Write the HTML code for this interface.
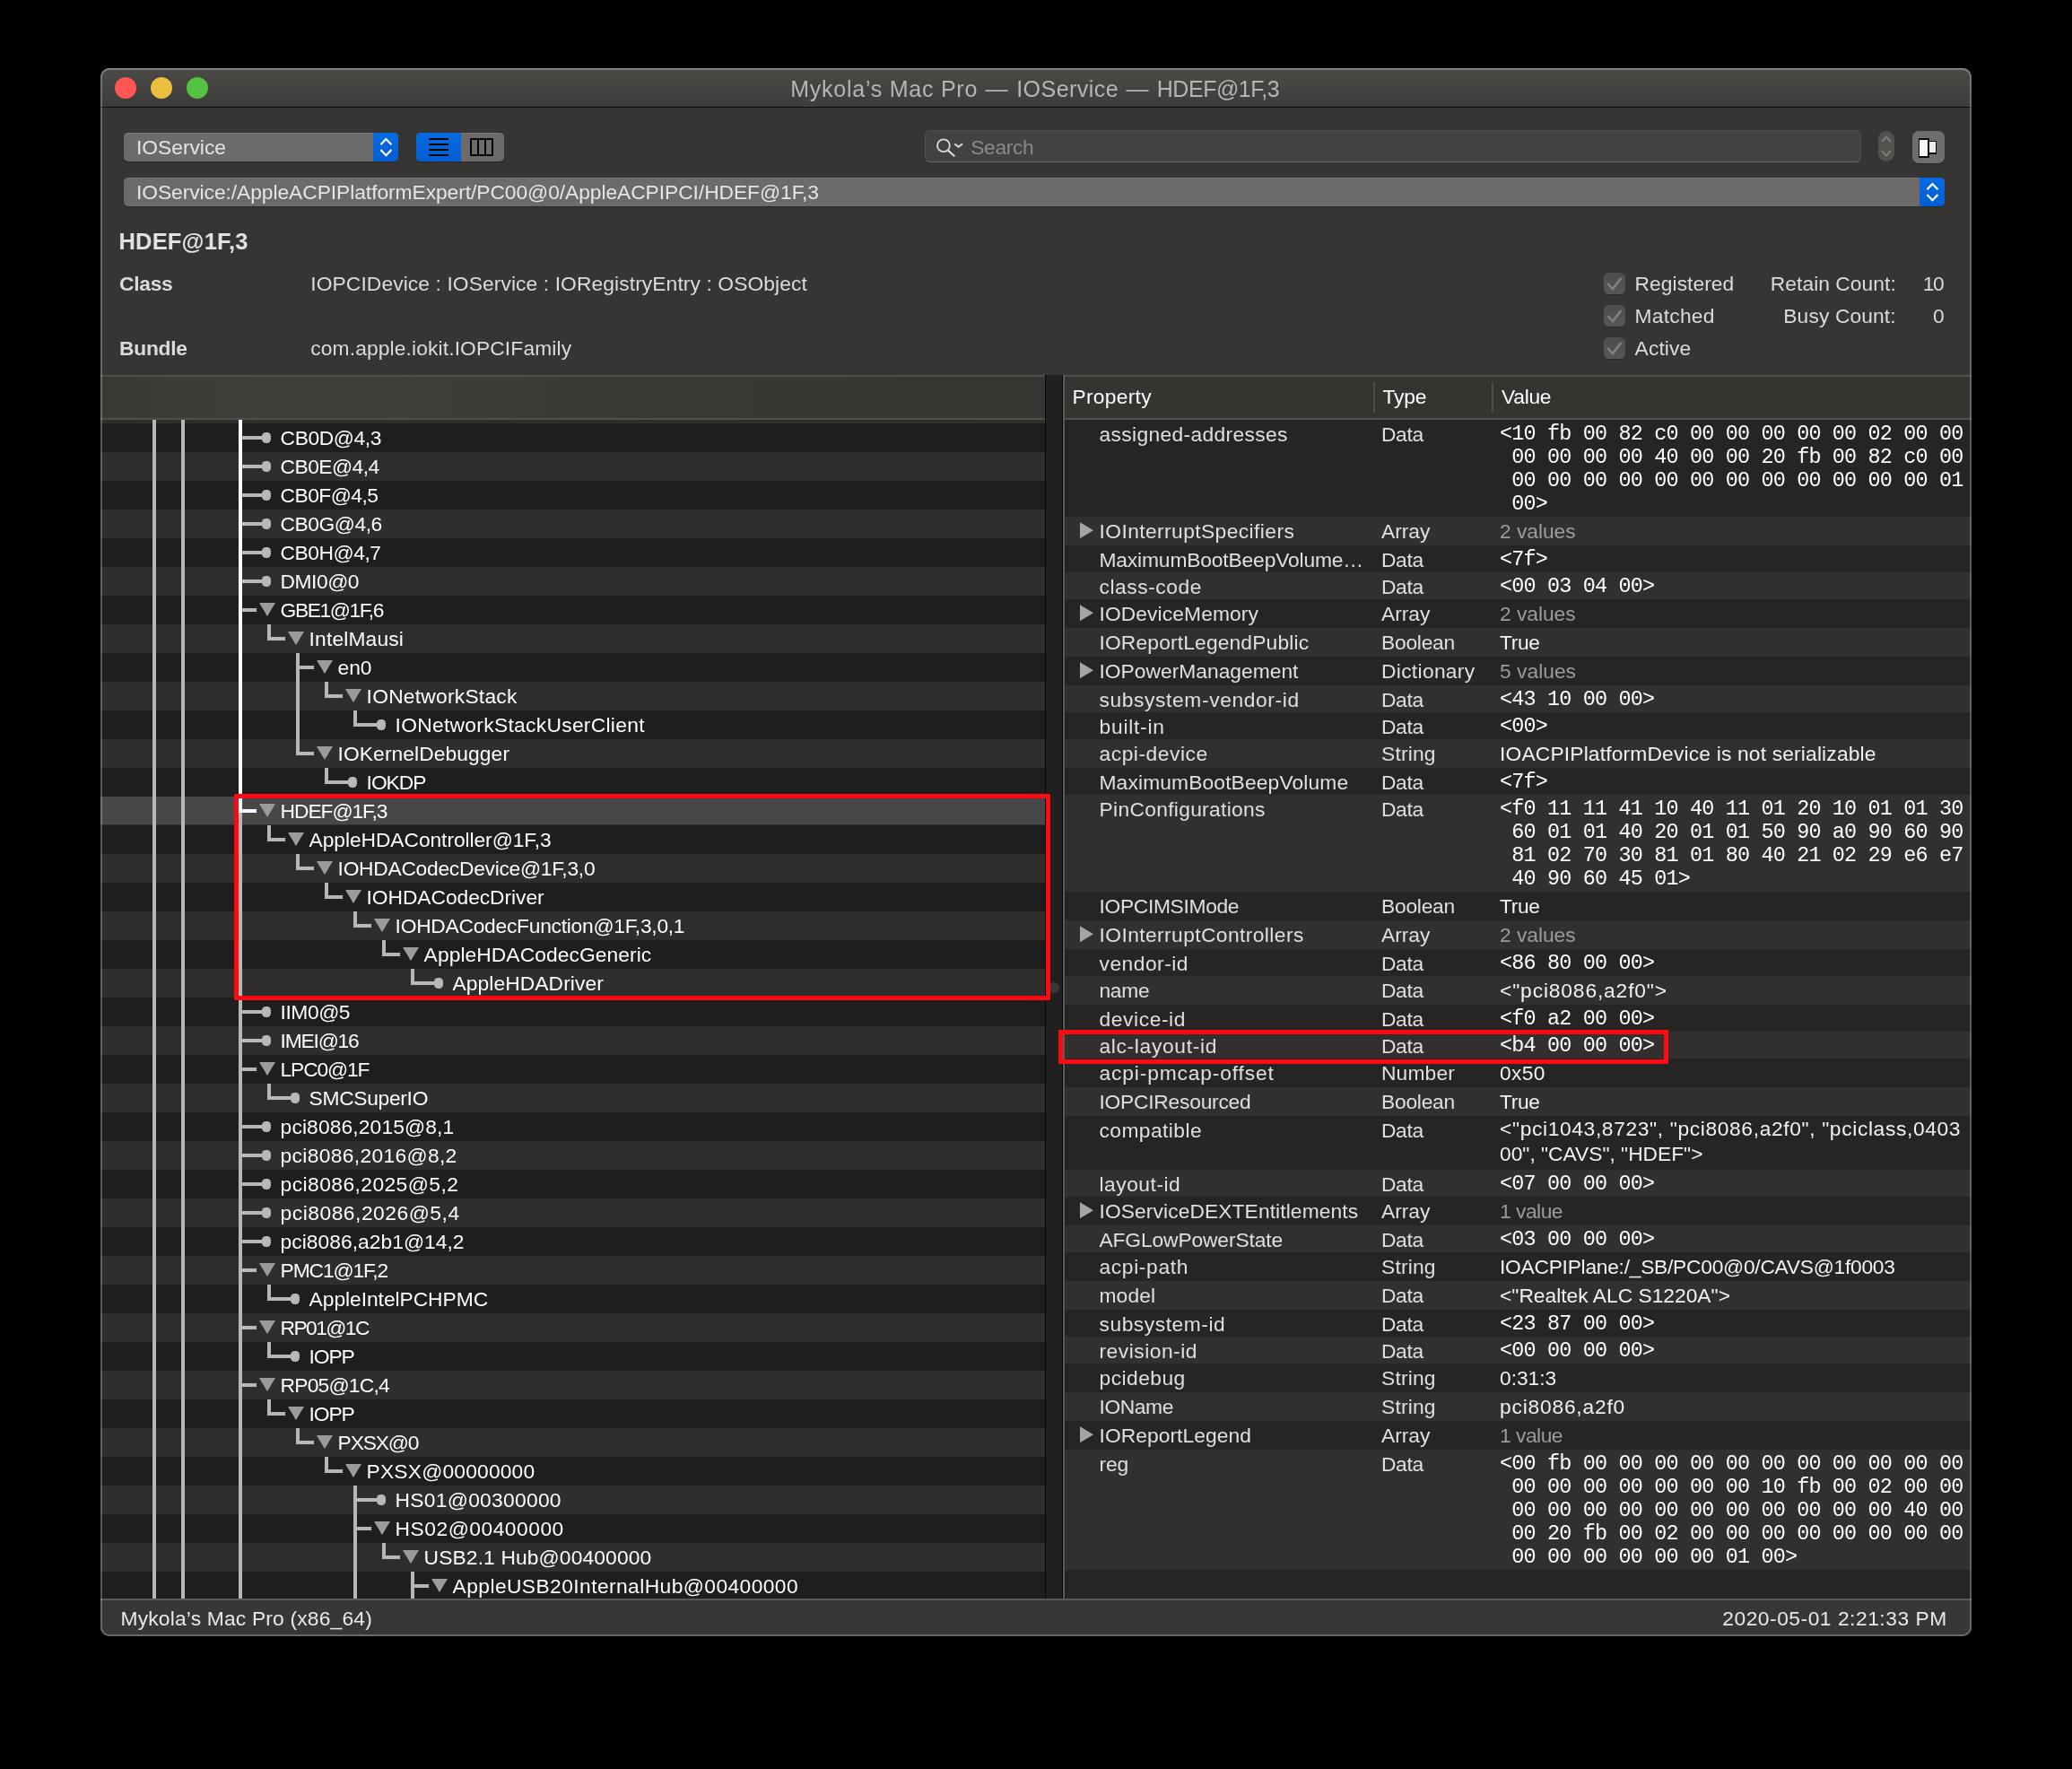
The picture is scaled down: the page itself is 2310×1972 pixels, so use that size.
<!DOCTYPE html>
<html><head><meta charset="utf-8"><title>IORegistryExplorer</title>
<style>
html,body{margin:0;padding:0;background:#000;}
body{width:2310px;height:1972px;position:relative;overflow:hidden;font-family:"Liberation Sans",sans-serif;}
#win{will-change:transform;position:absolute;left:112px;top:76px;width:2086px;height:1748px;background:#373534;border-radius:10px;overflow:hidden;}
#edge{position:absolute;left:112px;top:76px;width:2086px;height:1748px;border-radius:10px;box-shadow:inset 0 0 0 2px rgba(255,255,255,.25),inset 0 1px 0 rgba(255,255,255,.18);pointer-events:none;}
.a{position:absolute;}
.t{white-space:pre;color:#dcdbd9;}
.m{font-family:"Liberation Mono",monospace;}
</style></head><body>
<div id="win"><div class="a" style="left:0;top:0;width:2086px;height:43px;background:linear-gradient(#4b4a47,#3d3c3a);"></div><div class="a" style="left:0;top:43px;width:2086px;height:1px;background:#0c0c0c;"></div><div class="a " style="left:16px;top:10px;width:24px;height:24px;border-radius:50%;background:#fe5654;"></div><div class="a " style="left:56px;top:10px;width:24px;height:24px;border-radius:50%;background:#ecbe3f;"></div><div class="a " style="left:96px;top:10px;width:24px;height:24px;border-radius:50%;background:#52c243;"></div><div class="a t " style="top:6.00px;font-size:25px;line-height:34px;letter-spacing:0.749px;left:769.30px;color:#b7b5b2;">Mykola&#8217;s Mac Pro</div><div class="a t " style="top:6.00px;font-size:25px;line-height:34px;letter-spacing:0.500px;left:986.60px;color:#b7b5b2;">&#8212;</div><div class="a t " style="top:6.00px;font-size:25px;line-height:34px;letter-spacing:0.472px;left:1021.20px;color:#b7b5b2;">IOService</div><div class="a t " style="top:6.00px;font-size:25px;line-height:34px;letter-spacing:0.500px;left:1143.40px;color:#b7b5b2;">&#8212;</div><div class="a t " style="top:6.00px;font-size:25px;line-height:34px;letter-spacing:-0.477px;left:1177.80px;color:#b7b5b2;">HDEF@1F,3</div><div class="a " style="left:26px;top:72px;width:306px;height:32px;border-radius:5px;background:#6c6b69;box-shadow:inset 0 1px 0 rgba(255,255,255,.10),0 1px 1px rgba(0,0,0,.25);overflow:hidden;"><div style="position:absolute;right:0;top:0;width:28px;height:32px;background:linear-gradient(#086be3,#025ed2)"></div><svg width="28" height="32" viewBox="0 0 28 32" style="position:absolute;right:0;top:0"><path d="M8.4 13.3 L14.4 7 L20.4 13.3 M8.4 18.9 L14.4 25.2 L20.4 18.9" fill="none" stroke="#fff" stroke-width="2.2" stroke-linecap="butt" stroke-linejoin="miter"/></svg></div><div class="a t " style="top:72.00px;font-size:22.8px;line-height:32px;letter-spacing:-0.011px;left:40.00px;color:#e6e5e4;">IOService</div><div class="a " style="left:352px;top:72px;width:98px;height:32px;border-radius:5px;background:#6c6b69;box-shadow:inset 0 1px 0 rgba(255,255,255,.10),0 1px 1px rgba(0,0,0,.25);overflow:hidden;"><div style="position:absolute;left:0;top:0;width:50px;height:32px;background:linear-gradient(#086be3,#025ed2)"></div><div style="position:absolute;left:14px;top:6px;width:22px;height:2px;background:#000"></div><div style="position:absolute;left:14px;top:12px;width:22px;height:2px;background:#000"></div><div style="position:absolute;left:14px;top:18px;width:22px;height:2px;background:#000"></div><div style="position:absolute;left:14px;top:24px;width:22px;height:2px;background:#000"></div><div style="position:absolute;left:60px;top:6px;width:22px;height:16px;border:2px solid #000"></div><div style="position:absolute;left:68px;top:6px;width:2px;height:20px;background:#000"></div><div style="position:absolute;left:76px;top:6px;width:2px;height:20px;background:#000"></div></div><div class="a " style="left:919px;top:69px;width:1044px;height:36px;border-radius:6px;background:#434240;box-sizing:border-box;border:1px solid #4f4e4c;border-bottom-color:#686765;"><svg width="60" height="36" viewBox="0 0 60 36" style="position:absolute;left:-1px;top:-1px"><circle cx="20.9" cy="17.3" r="6.9" fill="none" stroke="#dddcda" stroke-width="1.8"/><path d="M25.9 22.6 L33.3 29.2" stroke="#dddcda" stroke-width="2.2" fill="none"/><path d="M33.2 15.2 L37.6 18.8 L42 15.2" stroke="#dddcda" stroke-width="2" fill="none"/></svg></div><div class="a t " style="top:72.00px;font-size:22.8px;line-height:32px;letter-spacing:-0.341px;left:970.20px;color:#8b8a88;">Search</div><div class="a " style="left:1982px;top:70px;width:18px;height:34px;border-radius:9px;background:#53524f;"><svg width="18" height="34" viewBox="0 0 18 34" style="position:absolute;left:0;top:0"><path d="M4 11.7 L8.9 6.6 L13.8 11.7 M4 22.2 L8.9 27.6 L13.8 22.2" fill="none" stroke="#7e7d7b" stroke-width="2"/></svg></div><div class="a " style="left:2020px;top:70px;width:36px;height:36px;border-radius:7px;background:#6f6e6b;box-shadow:0 1px 1px rgba(0,0,0,.3);"><div style="position:absolute;left:7px;top:8px;width:12px;height:21.5px;background:#0a0a0a;filter:blur(.4px)"></div><div style="position:absolute;left:17.5px;top:10.5px;width:9.5px;height:15px;background:#0a0a0a;filter:blur(.4px)"></div><div style="position:absolute;left:7.7px;top:10px;width:9.8px;height:18.4px;background:#f6f6f6"></div><div style="position:absolute;left:19px;top:12px;width:6.5px;height:12px;background:#ededed"></div></div><div class="a " style="left:26px;top:122px;width:2030px;height:32px;border-radius:5px;background:#6c6b69;box-shadow:inset 0 1px 0 rgba(255,255,255,.10),0 1px 1px rgba(0,0,0,.25);overflow:hidden;"><div style="position:absolute;right:0;top:0;width:28px;height:32px;background:linear-gradient(#086be3,#025ed2)"></div><svg width="28" height="32" viewBox="0 0 28 32" style="position:absolute;right:0;top:0"><path d="M8.4 13.3 L14.4 7 L20.4 13.3 M8.4 18.9 L14.4 25.2 L20.4 18.9" fill="none" stroke="#fff" stroke-width="2.2" stroke-linecap="butt" stroke-linejoin="miter"/></svg></div><div class="a t " style="top:122.00px;font-size:22.8px;line-height:32px;letter-spacing:-0.059px;left:40.00px;color:#e6e5e4;">IOService:/AppleACPIPlatformExpert/PC00@0/AppleACPIPCI/HDEF@1F,3</div><div class="a t " style="top:176.00px;font-size:25.5px;line-height:34px;letter-spacing:0.169px;left:20.50px;color:#e2e1df;font-weight:bold;">HDEF@1F,3</div><div class="a t " style="top:224.00px;font-size:22.8px;line-height:32px;letter-spacing:-0.268px;left:21.00px;color:#dcdbd9;font-weight:bold;">Class</div><div class="a t " style="top:296.00px;font-size:22.8px;line-height:32px;letter-spacing:-0.252px;left:21.00px;color:#dcdbd9;font-weight:bold;">Bundle</div><div class="a t " style="top:224.00px;font-size:22.8px;line-height:32px;letter-spacing:0.099px;left:234.25px;color:#dcdbd9;">IOPCIDevice : IOService : IORegistryEntry : OSObject</div><div class="a t " style="top:296.00px;font-size:22.8px;line-height:32px;letter-spacing:0.125px;left:234.25px;color:#dcdbd9;">com.apple.iokit.IOPCIFamily</div><div class="a " style="left:1676px;top:228px;width:24px;height:24px;border-radius:5.5px;background:linear-gradient(#4f4e4c,#585755);box-shadow:0 1px 1px rgba(0,0,0,.2);"><svg width="24" height="24" viewBox="0 0 24 24" style="position:absolute;left:0;top:0"><path d="M4.2 12.2 L10.1 18.1 L19.4 5.9" fill="none" stroke="#807f7d" stroke-width="2.6"/></svg></div><div class="a t " style="top:224.00px;font-size:22.8px;line-height:32px;letter-spacing:0.049px;left:1710.60px;color:#dcdbd9;">Registered</div><div class="a " style="left:1676px;top:264px;width:24px;height:24px;border-radius:5.5px;background:linear-gradient(#4f4e4c,#585755);box-shadow:0 1px 1px rgba(0,0,0,.2);"><svg width="24" height="24" viewBox="0 0 24 24" style="position:absolute;left:0;top:0"><path d="M4.2 12.2 L10.1 18.1 L19.4 5.9" fill="none" stroke="#807f7d" stroke-width="2.6"/></svg></div><div class="a t " style="top:260.00px;font-size:22.8px;line-height:32px;letter-spacing:0.221px;left:1710.60px;color:#dcdbd9;">Matched</div><div class="a " style="left:1676px;top:300px;width:24px;height:24px;border-radius:5.5px;background:linear-gradient(#4f4e4c,#585755);box-shadow:0 1px 1px rgba(0,0,0,.2);"><svg width="24" height="24" viewBox="0 0 24 24" style="position:absolute;left:0;top:0"><path d="M4.2 12.2 L10.1 18.1 L19.4 5.9" fill="none" stroke="#807f7d" stroke-width="2.6"/></svg></div><div class="a t " style="top:296.00px;font-size:22.8px;line-height:32px;letter-spacing:0.110px;left:1710.60px;color:#dcdbd9;">Active</div><div class="a t " style="top:224.00px;font-size:22.8px;line-height:32px;letter-spacing:0.045px;left:1861.80px;color:#dcdbd9;">Retain Count:</div><div class="a t " style="top:260.00px;font-size:22.8px;line-height:32px;letter-spacing:0.118px;left:1876.30px;color:#dcdbd9;">Busy Count:</div><div class="a t " style="top:224.00px;font-size:22.8px;line-height:32px;letter-spacing:-1.306px;left:2031.75px;color:#dcdbd9;">10</div><div class="a t " style="top:260.00px;font-size:22.8px;line-height:32px;letter-spacing:-1.181px;left:2043.00px;color:#dcdbd9;">0</div><div class="a " style="left:0px;top:344px;width:1053px;height:46px;background:linear-gradient(90deg,#3a3936 0px,#3f3e3b 180px,#3f3e3b 320px,#393835 620px,#373633 1053px);"></div><div class="a " style="left:1075px;top:344px;width:1011px;height:46px;background:#363431;"></div><div class="a " style="left:0px;top:342px;width:2086px;height:2px;background:#504f4b;"></div><div class="a " style="left:0px;top:390px;width:1053px;height:2px;background:#504f4b;"></div><div class="a " style="left:1075px;top:390px;width:1011px;height:2px;background:#504f4b;"></div><div class="a " style="left:1053px;top:342px;width:20px;height:1364px;background:#202020;border-left:1px solid #050505;border-right:1px solid #050505;box-sizing:border-box;"></div><div class="a " style="left:1073px;top:342px;width:2px;height:1364px;background:#5a5a58;"></div><div class="a " style="left:1057px;top:1019px;width:12px;height:12px;border-radius:50%;background:#393939;"></div><div class="a " style="left:0px;top:392px;width:1053px;height:4px;background:#2f2e2c;"></div><div class="a " style="left:0px;top:396px;width:1053px;height:32px;background:#1e1e1e;"></div><div class="a " style="left:0px;top:428px;width:1053px;height:32px;background:#2f2e2c;"></div><div class="a " style="left:0px;top:460px;width:1053px;height:32px;background:#1e1e1e;"></div><div class="a " style="left:0px;top:492px;width:1053px;height:32px;background:#2f2e2c;"></div><div class="a " style="left:0px;top:524px;width:1053px;height:32px;background:#1e1e1e;"></div><div class="a " style="left:0px;top:556px;width:1053px;height:32px;background:#2f2e2c;"></div><div class="a " style="left:0px;top:588px;width:1053px;height:32px;background:#1e1e1e;"></div><div class="a " style="left:0px;top:620px;width:1053px;height:32px;background:#2f2e2c;"></div><div class="a " style="left:0px;top:652px;width:1053px;height:32px;background:#1e1e1e;"></div><div class="a " style="left:0px;top:684px;width:1053px;height:32px;background:#2f2e2c;"></div><div class="a " style="left:0px;top:716px;width:1053px;height:32px;background:#1e1e1e;"></div><div class="a " style="left:0px;top:748px;width:1053px;height:32px;background:#2f2e2c;"></div><div class="a " style="left:0px;top:780px;width:1053px;height:32px;background:#1e1e1e;"></div><div class="a " style="left:0px;top:812px;width:1053px;height:32px;background:#2f2e2c;"></div><div class="a " style="left:0px;top:812px;width:1053px;height:30.5px;background:#474747;"></div><div class="a " style="left:0px;top:844px;width:1053px;height:32px;background:#1e1e1e;"></div><div class="a " style="left:0px;top:876px;width:1053px;height:32px;background:#2f2e2c;"></div><div class="a " style="left:0px;top:908px;width:1053px;height:32px;background:#1e1e1e;"></div><div class="a " style="left:0px;top:940px;width:1053px;height:32px;background:#2f2e2c;"></div><div class="a " style="left:0px;top:972px;width:1053px;height:32px;background:#1e1e1e;"></div><div class="a " style="left:0px;top:1004px;width:1053px;height:32px;background:#2f2e2c;"></div><div class="a " style="left:0px;top:1036px;width:1053px;height:32px;background:#1e1e1e;"></div><div class="a " style="left:0px;top:1068px;width:1053px;height:32px;background:#2f2e2c;"></div><div class="a " style="left:0px;top:1100px;width:1053px;height:32px;background:#1e1e1e;"></div><div class="a " style="left:0px;top:1132px;width:1053px;height:32px;background:#2f2e2c;"></div><div class="a " style="left:0px;top:1164px;width:1053px;height:32px;background:#1e1e1e;"></div><div class="a " style="left:0px;top:1196px;width:1053px;height:32px;background:#2f2e2c;"></div><div class="a " style="left:0px;top:1228px;width:1053px;height:32px;background:#1e1e1e;"></div><div class="a " style="left:0px;top:1260px;width:1053px;height:32px;background:#2f2e2c;"></div><div class="a " style="left:0px;top:1292px;width:1053px;height:32px;background:#1e1e1e;"></div><div class="a " style="left:0px;top:1324px;width:1053px;height:32px;background:#2f2e2c;"></div><div class="a " style="left:0px;top:1356px;width:1053px;height:32px;background:#1e1e1e;"></div><div class="a " style="left:0px;top:1388px;width:1053px;height:32px;background:#2f2e2c;"></div><div class="a " style="left:0px;top:1420px;width:1053px;height:32px;background:#1e1e1e;"></div><div class="a " style="left:0px;top:1452px;width:1053px;height:32px;background:#2f2e2c;"></div><div class="a " style="left:0px;top:1484px;width:1053px;height:32px;background:#1e1e1e;"></div><div class="a " style="left:0px;top:1516px;width:1053px;height:32px;background:#2f2e2c;"></div><div class="a " style="left:0px;top:1548px;width:1053px;height:32px;background:#1e1e1e;"></div><div class="a " style="left:0px;top:1580px;width:1053px;height:32px;background:#2f2e2c;"></div><div class="a " style="left:0px;top:1612px;width:1053px;height:32px;background:#1e1e1e;"></div><div class="a " style="left:0px;top:1644px;width:1053px;height:32px;background:#2f2e2c;"></div><div class="a " style="left:0px;top:1676px;width:1053px;height:30px;background:#1e1e1e;"></div><div class="a " style="left:58px;top:392px;width:4px;height:1314px;background:#b7b7b7;"></div><div class="a " style="left:90px;top:392px;width:4px;height:1314px;background:#b7b7b7;"></div><div class="a " style="left:154px;top:392px;width:4px;height:438px;background:#fbf9ff;"></div><div class="a " style="left:154px;top:830px;width:4px;height:876px;background:#b7b7b7;"></div><div class="a " style="left:218px;top:652px;width:4px;height:114px;background:#b7b7b7;"></div><div class="a " style="left:282px;top:1580px;width:4px;height:126px;background:#b7b7b7;"></div><div class="a " style="left:346px;top:1676px;width:4px;height:30px;background:#b7b7b7;"></div><div class="a " style="left:158px;top:410px;width:25px;height:4px;background:#b7b7b7;"></div><div class="a " style="left:180px;top:406px;width:10px;height:12px;border-radius:4.5px;background:#b7b7b7;"></div><div class="a t " style="top:396.00px;font-size:22.8px;line-height:32px;letter-spacing:-0.395px;left:200.60px;color:#ffffff;">CB0D@4,3</div><div class="a " style="left:158px;top:442px;width:25px;height:4px;background:#b7b7b7;"></div><div class="a " style="left:180px;top:438px;width:10px;height:12px;border-radius:4.5px;background:#b7b7b7;"></div><div class="a t " style="top:428.00px;font-size:22.8px;line-height:32px;letter-spacing:-0.551px;left:200.60px;color:#ffffff;">CB0E@4,4</div><div class="a " style="left:158px;top:474px;width:25px;height:4px;background:#b7b7b7;"></div><div class="a " style="left:180px;top:470px;width:10px;height:12px;border-radius:4.5px;background:#b7b7b7;"></div><div class="a t " style="top:460.00px;font-size:22.8px;line-height:32px;letter-spacing:-0.547px;left:200.60px;color:#ffffff;">CB0F@4,5</div><div class="a " style="left:158px;top:506px;width:25px;height:4px;background:#b7b7b7;"></div><div class="a " style="left:180px;top:502px;width:10px;height:12px;border-radius:4.5px;background:#b7b7b7;"></div><div class="a t " style="top:492.00px;font-size:22.8px;line-height:32px;letter-spacing:-0.460px;left:200.60px;color:#ffffff;">CB0G@4,6</div><div class="a " style="left:158px;top:538px;width:25px;height:4px;background:#b7b7b7;"></div><div class="a " style="left:180px;top:534px;width:10px;height:12px;border-radius:4.5px;background:#b7b7b7;"></div><div class="a t " style="top:524.00px;font-size:22.8px;line-height:32px;letter-spacing:-0.458px;left:200.60px;color:#ffffff;">CB0H@4,7</div><div class="a " style="left:158px;top:570px;width:25px;height:4px;background:#b7b7b7;"></div><div class="a " style="left:180px;top:566px;width:10px;height:12px;border-radius:4.5px;background:#b7b7b7;"></div><div class="a t " style="top:556.00px;font-size:22.8px;line-height:32px;letter-spacing:-0.467px;left:200.60px;color:#ffffff;">DMI0@0</div><div class="a " style="left:158px;top:602px;width:16px;height:4px;background:#b7b7b7;"></div><svg class="a" style="left:177px;top:596px" width="18" height="15" viewBox="0 0 18 15"><path d="M0 0H18L9 15Z" fill="#9b9b9a"/></svg><div class="a t " style="top:588.00px;font-size:22.8px;line-height:32px;letter-spacing:-1.397px;left:200.60px;color:#ffffff;">GBE1@1F,6</div><div class="a " style="left:186px;top:620px;width:4px;height:18px;background:#b7b7b7;"></div><div class="a " style="left:186px;top:634px;width:20px;height:4px;background:#b7b7b7;"></div><svg class="a" style="left:209px;top:628px" width="18" height="15" viewBox="0 0 18 15"><path d="M0 0H18L9 15Z" fill="#9b9b9a"/></svg><div class="a t " style="top:620.00px;font-size:22.8px;line-height:32px;letter-spacing:0.158px;left:232.60px;color:#ffffff;">IntelMausi</div><div class="a " style="left:222px;top:666px;width:16px;height:4px;background:#b7b7b7;"></div><svg class="a" style="left:241px;top:660px" width="18" height="15" viewBox="0 0 18 15"><path d="M0 0H18L9 15Z" fill="#9b9b9a"/></svg><div class="a t " style="top:652.00px;font-size:22.8px;line-height:32px;letter-spacing:-0.097px;left:264.60px;color:#ffffff;">en0</div><div class="a " style="left:250px;top:684px;width:4px;height:18px;background:#b7b7b7;"></div><div class="a " style="left:250px;top:698px;width:20px;height:4px;background:#b7b7b7;"></div><svg class="a" style="left:273px;top:692px" width="18" height="15" viewBox="0 0 18 15"><path d="M0 0H18L9 15Z" fill="#9b9b9a"/></svg><div class="a t " style="top:684.00px;font-size:22.8px;line-height:32px;letter-spacing:0.235px;left:296.60px;color:#ffffff;">IONetworkStack</div><div class="a " style="left:282px;top:716px;width:4px;height:18px;background:#b7b7b7;"></div><div class="a " style="left:282px;top:730px;width:29px;height:4px;background:#b7b7b7;"></div><div class="a " style="left:308px;top:726px;width:10px;height:12px;border-radius:4.5px;background:#b7b7b7;"></div><div class="a t " style="top:716.00px;font-size:22.8px;line-height:32px;letter-spacing:0.296px;left:328.60px;color:#ffffff;">IONetworkStackUserClient</div><div class="a " style="left:222px;top:762px;width:16px;height:4px;background:#b7b7b7;"></div><svg class="a" style="left:241px;top:756px" width="18" height="15" viewBox="0 0 18 15"><path d="M0 0H18L9 15Z" fill="#9b9b9a"/></svg><div class="a t " style="top:748.00px;font-size:22.8px;line-height:32px;letter-spacing:0.086px;left:264.60px;color:#ffffff;">IOKernelDebugger</div><div class="a " style="left:250px;top:780px;width:4px;height:18px;background:#b7b7b7;"></div><div class="a " style="left:250px;top:794px;width:29px;height:4px;background:#b7b7b7;"></div><div class="a " style="left:276px;top:790px;width:10px;height:12px;border-radius:4.5px;background:#b7b7b7;"></div><div class="a t " style="top:780.00px;font-size:22.8px;line-height:32px;letter-spacing:-1.040px;left:296.60px;color:#ffffff;">IOKDP</div><div class="a " style="left:158px;top:826px;width:16px;height:4px;background:#fbf9ff;"></div><svg class="a" style="left:177px;top:820px" width="18" height="15" viewBox="0 0 18 15"><path d="M0 0H18L9 15Z" fill="#9b9b9a"/></svg><div class="a t " style="top:812.00px;font-size:22.8px;line-height:32px;letter-spacing:-1.062px;left:200.60px;color:#ffffff;">HDEF@1F,3</div><div class="a " style="left:186px;top:844px;width:4px;height:18px;background:#b7b7b7;"></div><div class="a " style="left:186px;top:858px;width:20px;height:4px;background:#b7b7b7;"></div><svg class="a" style="left:209px;top:852px" width="18" height="15" viewBox="0 0 18 15"><path d="M0 0H18L9 15Z" fill="#9b9b9a"/></svg><div class="a t " style="top:844.00px;font-size:22.8px;line-height:32px;letter-spacing:-0.067px;left:232.60px;color:#ffffff;">AppleHDAController@1F,3</div><div class="a " style="left:218px;top:876px;width:4px;height:18px;background:#b7b7b7;"></div><div class="a " style="left:218px;top:890px;width:20px;height:4px;background:#b7b7b7;"></div><svg class="a" style="left:241px;top:884px" width="18" height="15" viewBox="0 0 18 15"><path d="M0 0H18L9 15Z" fill="#9b9b9a"/></svg><div class="a t " style="top:876.00px;font-size:22.8px;line-height:32px;letter-spacing:-0.275px;left:264.60px;color:#ffffff;">IOHDACodecDevice@1F,3,0</div><div class="a " style="left:250px;top:908px;width:4px;height:18px;background:#b7b7b7;"></div><div class="a " style="left:250px;top:922px;width:20px;height:4px;background:#b7b7b7;"></div><svg class="a" style="left:273px;top:916px" width="18" height="15" viewBox="0 0 18 15"><path d="M0 0H18L9 15Z" fill="#9b9b9a"/></svg><div class="a t " style="top:908.00px;font-size:22.8px;line-height:32px;letter-spacing:-0.057px;left:296.60px;color:#ffffff;">IOHDACodecDriver</div><div class="a " style="left:282px;top:940px;width:4px;height:18px;background:#b7b7b7;"></div><div class="a " style="left:282px;top:954px;width:20px;height:4px;background:#b7b7b7;"></div><svg class="a" style="left:305px;top:948px" width="18" height="15" viewBox="0 0 18 15"><path d="M0 0H18L9 15Z" fill="#9b9b9a"/></svg><div class="a t " style="top:940.00px;font-size:22.8px;line-height:32px;letter-spacing:-0.263px;left:328.60px;color:#ffffff;">IOHDACodecFunction@1F,3,0,1</div><div class="a " style="left:314px;top:972px;width:4px;height:18px;background:#b7b7b7;"></div><div class="a " style="left:314px;top:986px;width:20px;height:4px;background:#b7b7b7;"></div><svg class="a" style="left:337px;top:980px" width="18" height="15" viewBox="0 0 18 15"><path d="M0 0H18L9 15Z" fill="#9b9b9a"/></svg><div class="a t " style="top:972.00px;font-size:22.8px;line-height:32px;letter-spacing:0.077px;left:360.60px;color:#ffffff;">AppleHDACodecGeneric</div><div class="a " style="left:346px;top:1004px;width:4px;height:18px;background:#b7b7b7;"></div><div class="a " style="left:346px;top:1018px;width:29px;height:4px;background:#b7b7b7;"></div><div class="a " style="left:372px;top:1014px;width:10px;height:12px;border-radius:4.5px;background:#b7b7b7;"></div><div class="a t " style="top:1004.00px;font-size:22.8px;line-height:32px;letter-spacing:0.071px;left:392.60px;color:#ffffff;">AppleHDADriver</div><div class="a " style="left:158px;top:1050px;width:25px;height:4px;background:#b7b7b7;"></div><div class="a " style="left:180px;top:1046px;width:10px;height:12px;border-radius:4.5px;background:#b7b7b7;"></div><div class="a t " style="top:1036.00px;font-size:22.8px;line-height:32px;letter-spacing:-0.445px;left:200.60px;color:#ffffff;">IIM0@5</div><div class="a " style="left:158px;top:1082px;width:25px;height:4px;background:#b7b7b7;"></div><div class="a " style="left:180px;top:1078px;width:10px;height:12px;border-radius:4.5px;background:#b7b7b7;"></div><div class="a t " style="top:1068.00px;font-size:22.8px;line-height:32px;letter-spacing:-1.197px;left:200.60px;color:#ffffff;">IMEI@16</div><div class="a " style="left:158px;top:1114px;width:16px;height:4px;background:#b7b7b7;"></div><svg class="a" style="left:177px;top:1108px" width="18" height="15" viewBox="0 0 18 15"><path d="M0 0H18L9 15Z" fill="#9b9b9a"/></svg><div class="a t " style="top:1100.00px;font-size:22.8px;line-height:32px;letter-spacing:-1.149px;left:200.60px;color:#ffffff;">LPC0@1F</div><div class="a " style="left:186px;top:1132px;width:4px;height:18px;background:#b7b7b7;"></div><div class="a " style="left:186px;top:1146px;width:29px;height:4px;background:#b7b7b7;"></div><div class="a " style="left:212px;top:1142px;width:10px;height:12px;border-radius:4.5px;background:#b7b7b7;"></div><div class="a t " style="top:1132.00px;font-size:22.8px;line-height:32px;letter-spacing:-0.308px;left:232.60px;color:#ffffff;">SMCSuperIO</div><div class="a " style="left:158px;top:1178px;width:25px;height:4px;background:#b7b7b7;"></div><div class="a " style="left:180px;top:1174px;width:10px;height:12px;border-radius:4.5px;background:#b7b7b7;"></div><div class="a t " style="top:1164.00px;font-size:22.8px;line-height:32px;letter-spacing:0.124px;left:200.60px;color:#ffffff;">pci8086,2015@8,1</div><div class="a " style="left:158px;top:1210px;width:25px;height:4px;background:#b7b7b7;"></div><div class="a " style="left:180px;top:1206px;width:10px;height:12px;border-radius:4.5px;background:#b7b7b7;"></div><div class="a t " style="top:1196.00px;font-size:22.8px;line-height:32px;letter-spacing:0.327px;left:200.60px;color:#ffffff;">pci8086,2016@8,2</div><div class="a " style="left:158px;top:1242px;width:25px;height:4px;background:#b7b7b7;"></div><div class="a " style="left:180px;top:1238px;width:10px;height:12px;border-radius:4.5px;background:#b7b7b7;"></div><div class="a t " style="top:1228.00px;font-size:22.8px;line-height:32px;letter-spacing:0.436px;left:200.60px;color:#ffffff;">pci8086,2025@5,2</div><div class="a " style="left:158px;top:1274px;width:25px;height:4px;background:#b7b7b7;"></div><div class="a " style="left:180px;top:1270px;width:10px;height:12px;border-radius:4.5px;background:#b7b7b7;"></div><div class="a t " style="top:1260.00px;font-size:22.8px;line-height:32px;letter-spacing:0.515px;left:200.60px;color:#ffffff;">pci8086,2026@5,4</div><div class="a " style="left:158px;top:1306px;width:25px;height:4px;background:#b7b7b7;"></div><div class="a " style="left:180px;top:1302px;width:10px;height:12px;border-radius:4.5px;background:#b7b7b7;"></div><div class="a t " style="top:1292.00px;font-size:22.8px;line-height:32px;letter-spacing:0.032px;left:200.60px;color:#ffffff;">pci8086,a2b1@14,2</div><div class="a " style="left:158px;top:1338px;width:16px;height:4px;background:#b7b7b7;"></div><svg class="a" style="left:177px;top:1332px" width="18" height="15" viewBox="0 0 18 15"><path d="M0 0H18L9 15Z" fill="#9b9b9a"/></svg><div class="a t " style="top:1324.00px;font-size:22.8px;line-height:32px;letter-spacing:-1.121px;left:200.60px;color:#ffffff;">PMC1@1F,2</div><div class="a " style="left:186px;top:1356px;width:4px;height:18px;background:#b7b7b7;"></div><div class="a " style="left:186px;top:1370px;width:29px;height:4px;background:#b7b7b7;"></div><div class="a " style="left:212px;top:1366px;width:10px;height:12px;border-radius:4.5px;background:#b7b7b7;"></div><div class="a t " style="top:1356.00px;font-size:22.8px;line-height:32px;letter-spacing:-0.045px;left:232.60px;color:#ffffff;">AppleIntelPCHPMC</div><div class="a " style="left:158px;top:1402px;width:16px;height:4px;background:#b7b7b7;"></div><svg class="a" style="left:177px;top:1396px" width="18" height="15" viewBox="0 0 18 15"><path d="M0 0H18L9 15Z" fill="#9b9b9a"/></svg><div class="a t " style="top:1388.00px;font-size:22.8px;line-height:32px;letter-spacing:-1.583px;left:200.60px;color:#ffffff;">RP01@1C</div><div class="a " style="left:186px;top:1420px;width:4px;height:18px;background:#b7b7b7;"></div><div class="a " style="left:186px;top:1434px;width:29px;height:4px;background:#b7b7b7;"></div><div class="a " style="left:212px;top:1430px;width:10px;height:12px;border-radius:4.5px;background:#b7b7b7;"></div><div class="a t " style="top:1420.00px;font-size:22.8px;line-height:32px;letter-spacing:-1.121px;left:232.60px;color:#ffffff;">IOPP</div><div class="a " style="left:158px;top:1466px;width:16px;height:4px;background:#b7b7b7;"></div><svg class="a" style="left:177px;top:1460px" width="18" height="15" viewBox="0 0 18 15"><path d="M0 0H18L9 15Z" fill="#9b9b9a"/></svg><div class="a t " style="top:1452.00px;font-size:22.8px;line-height:32px;letter-spacing:-0.788px;left:200.60px;color:#ffffff;">RP05@1C,4</div><div class="a " style="left:186px;top:1484px;width:4px;height:18px;background:#b7b7b7;"></div><div class="a " style="left:186px;top:1498px;width:20px;height:4px;background:#b7b7b7;"></div><svg class="a" style="left:209px;top:1492px" width="18" height="15" viewBox="0 0 18 15"><path d="M0 0H18L9 15Z" fill="#9b9b9a"/></svg><div class="a t " style="top:1484.00px;font-size:22.8px;line-height:32px;letter-spacing:-1.121px;left:232.60px;color:#ffffff;">IOPP</div><div class="a " style="left:218px;top:1516px;width:4px;height:18px;background:#b7b7b7;"></div><div class="a " style="left:218px;top:1530px;width:20px;height:4px;background:#b7b7b7;"></div><svg class="a" style="left:241px;top:1524px" width="18" height="15" viewBox="0 0 18 15"><path d="M0 0H18L9 15Z" fill="#9b9b9a"/></svg><div class="a t " style="top:1516.00px;font-size:22.8px;line-height:32px;letter-spacing:-1.152px;left:264.60px;color:#ffffff;">PXSX@0</div><div class="a " style="left:250px;top:1548px;width:4px;height:18px;background:#b7b7b7;"></div><div class="a " style="left:250px;top:1562px;width:20px;height:4px;background:#b7b7b7;"></div><svg class="a" style="left:273px;top:1556px" width="18" height="15" viewBox="0 0 18 15"><path d="M0 0H18L9 15Z" fill="#9b9b9a"/></svg><div class="a t " style="top:1548.00px;font-size:22.8px;line-height:32px;letter-spacing:0.179px;left:296.60px;color:#ffffff;">PXSX@00000000</div><div class="a " style="left:286px;top:1594px;width:25px;height:4px;background:#b7b7b7;"></div><div class="a " style="left:308px;top:1590px;width:10px;height:12px;border-radius:4.5px;background:#b7b7b7;"></div><div class="a t " style="top:1580.00px;font-size:22.8px;line-height:32px;letter-spacing:0.279px;left:328.60px;color:#ffffff;">HS01@00300000</div><div class="a " style="left:286px;top:1626px;width:16px;height:4px;background:#b7b7b7;"></div><svg class="a" style="left:305px;top:1620px" width="18" height="15" viewBox="0 0 18 15"><path d="M0 0H18L9 15Z" fill="#9b9b9a"/></svg><div class="a t " style="top:1612.00px;font-size:22.8px;line-height:32px;letter-spacing:0.509px;left:328.60px;color:#ffffff;">HS02@00400000</div><div class="a " style="left:314px;top:1644px;width:4px;height:18px;background:#b7b7b7;"></div><div class="a " style="left:314px;top:1658px;width:20px;height:4px;background:#b7b7b7;"></div><svg class="a" style="left:337px;top:1652px" width="18" height="15" viewBox="0 0 18 15"><path d="M0 0H18L9 15Z" fill="#9b9b9a"/></svg><div class="a t " style="top:1644.00px;font-size:22.8px;line-height:32px;letter-spacing:0.127px;left:360.60px;color:#ffffff;">USB2.1 Hub@00400000</div><div class="a " style="left:350px;top:1690px;width:16px;height:4px;background:#b7b7b7;"></div><svg class="a" style="left:369px;top:1684px" width="18" height="15" viewBox="0 0 18 15"><path d="M0 0H18L9 15Z" fill="#9b9b9a"/></svg><div class="a t " style="top:1676.00px;font-size:22.8px;line-height:32px;letter-spacing:0.416px;left:392.60px;color:#ffffff;">AppleUSB20InternalHub@00400000</div><div class="a t " style="top:350.00px;font-size:22.8px;line-height:32px;letter-spacing:0.291px;left:1083.40px;color:#ffffff;">Property</div><div class="a t " style="top:350.00px;font-size:22.8px;line-height:32px;letter-spacing:-0.170px;left:1429.60px;color:#ffffff;">Type</div><div class="a t " style="top:350.00px;font-size:22.8px;line-height:32px;letter-spacing:-0.275px;left:1562.00px;color:#ffffff;">Value</div><div class="a " style="left:1419px;top:350px;width:2px;height:34px;background:#4e4d49;"></div><div class="a " style="left:1551px;top:350px;width:2px;height:34px;background:#4e4d49;"></div><div class="a " style="left:1075px;top:392px;width:1011px;height:108px;background:#262524;"></div><div class="a t " style="top:392.00px;font-size:22.8px;line-height:32px;letter-spacing:0.344px;left:1113.50px;color:#e0dfde;">assigned-addresses</div><div class="a t " style="top:392.00px;font-size:22.8px;line-height:32px;letter-spacing:-0.353px;left:1428.00px;color:#e0dfde;">Data</div><div class="a t m" style="top:391.00px;font-size:23.5px;line-height:33px;left:1560.00px;color:#ffffff;white-space:pre;letter-spacing:-0.857px;">&lt;10 fb 00 82 c0 00 00 00 00 00 02 00 00</div><div class="a t m" style="top:417.00px;font-size:23.5px;line-height:33px;left:1560.00px;color:#ffffff;white-space:pre;letter-spacing:-0.857px;"> 00 00 00 00 40 00 00 20 fb 00 82 c0 00</div><div class="a t m" style="top:443.00px;font-size:23.5px;line-height:33px;left:1560.00px;color:#ffffff;white-space:pre;letter-spacing:-0.857px;"> 00 00 00 00 00 00 00 00 00 00 00 00 01</div><div class="a t m" style="top:469.00px;font-size:23.5px;line-height:33px;left:1560.00px;color:#ffffff;white-space:pre;letter-spacing:-0.857px;"> 00&gt;</div><div class="a " style="left:1075px;top:500px;width:1011px;height:32px;background:#31302e;"></div><svg class="a" style="left:1092px;top:506px" width="15" height="19" viewBox="0 0 15 19"><path d="M0 0.2V18.2L15 9.2Z" fill="#a6a5a3"/></svg><div class="a t " style="top:500.00px;font-size:22.8px;line-height:32px;letter-spacing:0.412px;left:1113.50px;color:#e0dfde;">IOInterruptSpecifiers</div><div class="a t " style="top:500.00px;font-size:22.8px;line-height:32px;letter-spacing:-0.045px;left:1428.00px;color:#e0dfde;">Array</div><div class="a t " style="top:500.00px;font-size:22.8px;line-height:32px;letter-spacing:-0.053px;left:1560.00px;color:#9c9b99;">2 values</div><div class="a " style="left:1075px;top:532px;width:1011px;height:30px;background:#262524;"></div><div class="a t " style="top:532.00px;font-size:22.8px;line-height:32px;letter-spacing:-0.151px;left:1113.50px;color:#e0dfde;">MaximumBootBeepVolume&#8230;</div><div class="a t " style="top:532.00px;font-size:22.8px;line-height:32px;letter-spacing:-0.353px;left:1428.00px;color:#e0dfde;">Data</div><div class="a t m" style="top:531.00px;font-size:23.5px;line-height:33px;left:1560.00px;color:#ffffff;white-space:pre;letter-spacing:-0.857px;">&lt;7f&gt;</div><div class="a " style="left:1075px;top:562px;width:1011px;height:30px;background:#31302e;"></div><div class="a t " style="top:562.00px;font-size:22.8px;line-height:32px;letter-spacing:0.552px;left:1113.50px;color:#e0dfde;">class-code</div><div class="a t " style="top:562.00px;font-size:22.8px;line-height:32px;letter-spacing:-0.353px;left:1428.00px;color:#e0dfde;">Data</div><div class="a t m" style="top:561.00px;font-size:23.5px;line-height:33px;left:1560.00px;color:#ffffff;white-space:pre;letter-spacing:-0.857px;">&lt;00 03 04 00&gt;</div><div class="a " style="left:1075px;top:592px;width:1011px;height:32px;background:#262524;"></div><svg class="a" style="left:1092px;top:598px" width="15" height="19" viewBox="0 0 15 19"><path d="M0 0.2V18.2L15 9.2Z" fill="#a6a5a3"/></svg><div class="a t " style="top:592.00px;font-size:22.8px;line-height:32px;letter-spacing:0.100px;left:1113.50px;color:#e0dfde;">IODeviceMemory</div><div class="a t " style="top:592.00px;font-size:22.8px;line-height:32px;letter-spacing:-0.045px;left:1428.00px;color:#e0dfde;">Array</div><div class="a t " style="top:592.00px;font-size:22.8px;line-height:32px;letter-spacing:-0.053px;left:1560.00px;color:#9c9b99;">2 values</div><div class="a " style="left:1075px;top:624px;width:1011px;height:32px;background:#31302e;"></div><div class="a t " style="top:624.00px;font-size:22.8px;line-height:32px;letter-spacing:0.153px;left:1113.50px;color:#e0dfde;">IOReportLegendPublic</div><div class="a t " style="top:624.00px;font-size:22.8px;line-height:32px;letter-spacing:-0.240px;left:1428.00px;color:#e0dfde;">Boolean</div><div class="a t " style="top:624.00px;font-size:22.8px;line-height:32px;letter-spacing:-0.384px;left:1560.00px;color:#f2f2f2;">True</div><div class="a " style="left:1075px;top:656px;width:1011px;height:32px;background:#262524;"></div><svg class="a" style="left:1092px;top:662px" width="15" height="19" viewBox="0 0 15 19"><path d="M0 0.2V18.2L15 9.2Z" fill="#a6a5a3"/></svg><div class="a t " style="top:656.00px;font-size:22.8px;line-height:32px;letter-spacing:0.013px;left:1113.50px;color:#e0dfde;">IOPowerManagement</div><div class="a t " style="top:656.00px;font-size:22.8px;line-height:32px;letter-spacing:0.313px;left:1428.00px;color:#e0dfde;">Dictionary</div><div class="a t " style="top:656.00px;font-size:22.8px;line-height:32px;letter-spacing:0.010px;left:1560.00px;color:#9c9b99;">5 values</div><div class="a " style="left:1075px;top:688px;width:1011px;height:30px;background:#31302e;"></div><div class="a t " style="top:688.00px;font-size:22.8px;line-height:32px;letter-spacing:0.612px;left:1113.50px;color:#e0dfde;">subsystem-vendor-id</div><div class="a t " style="top:688.00px;font-size:22.8px;line-height:32px;letter-spacing:-0.353px;left:1428.00px;color:#e0dfde;">Data</div><div class="a t m" style="top:687.00px;font-size:23.5px;line-height:33px;left:1560.00px;color:#ffffff;white-space:pre;letter-spacing:-0.857px;">&lt;43 10 00 00&gt;</div><div class="a " style="left:1075px;top:718px;width:1011px;height:30px;background:#262524;"></div><div class="a t " style="top:718.00px;font-size:22.8px;line-height:32px;letter-spacing:0.760px;left:1113.50px;color:#e0dfde;">built-in</div><div class="a t " style="top:718.00px;font-size:22.8px;line-height:32px;letter-spacing:-0.353px;left:1428.00px;color:#e0dfde;">Data</div><div class="a t m" style="top:717.00px;font-size:23.5px;line-height:33px;left:1560.00px;color:#ffffff;white-space:pre;letter-spacing:-0.857px;">&lt;00&gt;</div><div class="a " style="left:1075px;top:748px;width:1011px;height:32px;background:#31302e;"></div><div class="a t " style="top:748.00px;font-size:22.8px;line-height:32px;letter-spacing:0.538px;left:1113.50px;color:#e0dfde;">acpi-device</div><div class="a t " style="top:748.00px;font-size:22.8px;line-height:32px;letter-spacing:0.198px;left:1428.00px;color:#e0dfde;">String</div><div class="a t " style="top:748.00px;font-size:22.8px;line-height:32px;letter-spacing:0.166px;left:1560.00px;color:#f2f2f2;">IOACPIPlatformDevice is not serializable</div><div class="a " style="left:1075px;top:780px;width:1011px;height:30px;background:#262524;"></div><div class="a t " style="top:780.00px;font-size:22.8px;line-height:32px;letter-spacing:0.130px;left:1113.50px;color:#e0dfde;">MaximumBootBeepVolume</div><div class="a t " style="top:780.00px;font-size:22.8px;line-height:32px;letter-spacing:-0.353px;left:1428.00px;color:#e0dfde;">Data</div><div class="a t m" style="top:779.00px;font-size:23.5px;line-height:33px;left:1560.00px;color:#ffffff;white-space:pre;letter-spacing:-0.857px;">&lt;7f&gt;</div><div class="a " style="left:1075px;top:810px;width:1011px;height:108px;background:#31302e;"></div><div class="a t " style="top:810.00px;font-size:22.8px;line-height:32px;letter-spacing:0.310px;left:1113.50px;color:#e0dfde;">PinConfigurations</div><div class="a t " style="top:810.00px;font-size:22.8px;line-height:32px;letter-spacing:-0.353px;left:1428.00px;color:#e0dfde;">Data</div><div class="a t m" style="top:809.00px;font-size:23.5px;line-height:33px;left:1560.00px;color:#ffffff;white-space:pre;letter-spacing:-0.857px;">&lt;f0 11 11 41 10 40 11 01 20 10 01 01 30</div><div class="a t m" style="top:835.00px;font-size:23.5px;line-height:33px;left:1560.00px;color:#ffffff;white-space:pre;letter-spacing:-0.857px;"> 60 01 01 40 20 01 01 50 90 a0 90 60 90</div><div class="a t m" style="top:861.00px;font-size:23.5px;line-height:33px;left:1560.00px;color:#ffffff;white-space:pre;letter-spacing:-0.857px;"> 81 02 70 30 81 01 80 40 21 02 29 e6 e7</div><div class="a t m" style="top:887.00px;font-size:23.5px;line-height:33px;left:1560.00px;color:#ffffff;white-space:pre;letter-spacing:-0.857px;"> 40 90 60 45 01&gt;</div><div class="a " style="left:1075px;top:918px;width:1011px;height:32px;background:#262524;"></div><div class="a t " style="top:918.00px;font-size:22.8px;line-height:32px;letter-spacing:-0.325px;left:1113.50px;color:#e0dfde;">IOPCIMSIMode</div><div class="a t " style="top:918.00px;font-size:22.8px;line-height:32px;letter-spacing:-0.240px;left:1428.00px;color:#e0dfde;">Boolean</div><div class="a t " style="top:918.00px;font-size:22.8px;line-height:32px;letter-spacing:-0.384px;left:1560.00px;color:#f2f2f2;">True</div><div class="a " style="left:1075px;top:950px;width:1011px;height:32px;background:#31302e;"></div><svg class="a" style="left:1092px;top:956px" width="15" height="19" viewBox="0 0 15 19"><path d="M0 0.2V18.2L15 9.2Z" fill="#a6a5a3"/></svg><div class="a t " style="top:950.00px;font-size:22.8px;line-height:32px;letter-spacing:0.410px;left:1113.50px;color:#e0dfde;">IOInterruptControllers</div><div class="a t " style="top:950.00px;font-size:22.8px;line-height:32px;letter-spacing:-0.045px;left:1428.00px;color:#e0dfde;">Array</div><div class="a t " style="top:950.00px;font-size:22.8px;line-height:32px;letter-spacing:-0.053px;left:1560.00px;color:#9c9b99;">2 values</div><div class="a " style="left:1075px;top:982px;width:1011px;height:30px;background:#262524;"></div><div class="a t " style="top:982.00px;font-size:22.8px;line-height:32px;letter-spacing:0.494px;left:1113.50px;color:#e0dfde;">vendor-id</div><div class="a t " style="top:982.00px;font-size:22.8px;line-height:32px;letter-spacing:-0.353px;left:1428.00px;color:#e0dfde;">Data</div><div class="a t m" style="top:981.00px;font-size:23.5px;line-height:33px;left:1560.00px;color:#ffffff;white-space:pre;letter-spacing:-0.857px;">&lt;86 80 00 00&gt;</div><div class="a " style="left:1075px;top:1012px;width:1011px;height:32px;background:#31302e;"></div><div class="a t " style="top:1012.00px;font-size:22.8px;line-height:32px;letter-spacing:-0.321px;left:1113.50px;color:#e0dfde;">name</div><div class="a t " style="top:1012.00px;font-size:22.8px;line-height:32px;letter-spacing:-0.353px;left:1428.00px;color:#e0dfde;">Data</div><div class="a t " style="top:1012.00px;font-size:22.8px;line-height:32px;letter-spacing:0.850px;left:1560.00px;color:#f2f2f2;">&lt;&quot;pci8086,a2f0&quot;&gt;</div><div class="a " style="left:1075px;top:1044px;width:1011px;height:30px;background:#262524;"></div><div class="a t " style="top:1044.00px;font-size:22.8px;line-height:32px;letter-spacing:0.584px;left:1113.50px;color:#e0dfde;">device-id</div><div class="a t " style="top:1044.00px;font-size:22.8px;line-height:32px;letter-spacing:-0.353px;left:1428.00px;color:#e0dfde;">Data</div><div class="a t m" style="top:1043.00px;font-size:23.5px;line-height:33px;left:1560.00px;color:#ffffff;white-space:pre;letter-spacing:-0.857px;">&lt;f0 a2 00 00&gt;</div><div class="a " style="left:1075px;top:1074px;width:1011px;height:30px;background:#31302e;"></div><div class="a t " style="top:1074.00px;font-size:22.8px;line-height:32px;letter-spacing:0.660px;left:1113.50px;color:#e0dfde;">alc-layout-id</div><div class="a t " style="top:1074.00px;font-size:22.8px;line-height:32px;letter-spacing:-0.353px;left:1428.00px;color:#e0dfde;">Data</div><div class="a t m" style="top:1073.00px;font-size:23.5px;line-height:33px;left:1560.00px;color:#ffffff;white-space:pre;letter-spacing:-0.857px;">&lt;b4 00 00 00&gt;</div><div class="a " style="left:1075px;top:1104px;width:1011px;height:32px;background:#262524;"></div><div class="a t " style="top:1104.00px;font-size:22.8px;line-height:32px;letter-spacing:0.850px;left:1113.50px;color:#e0dfde;">acpi-pmcap-offset</div><div class="a t " style="top:1104.00px;font-size:22.8px;line-height:32px;letter-spacing:0.151px;left:1428.00px;color:#e0dfde;">Number</div><div class="a t " style="top:1104.00px;font-size:22.8px;line-height:32px;letter-spacing:0.327px;left:1560.00px;color:#f2f2f2;">0x50</div><div class="a " style="left:1075px;top:1136px;width:1011px;height:32px;background:#31302e;"></div><div class="a t " style="top:1136.00px;font-size:22.8px;line-height:32px;letter-spacing:-0.239px;left:1113.50px;color:#e0dfde;">IOPCIResourced</div><div class="a t " style="top:1136.00px;font-size:22.8px;line-height:32px;letter-spacing:-0.240px;left:1428.00px;color:#e0dfde;">Boolean</div><div class="a t " style="top:1136.00px;font-size:22.8px;line-height:32px;letter-spacing:-0.384px;left:1560.00px;color:#f2f2f2;">True</div><div class="a " style="left:1075px;top:1168px;width:1011px;height:60px;background:#262524;"></div><div class="a t " style="top:1168.00px;font-size:22.8px;line-height:32px;letter-spacing:0.424px;left:1113.50px;color:#e0dfde;">compatible</div><div class="a t " style="top:1168.00px;font-size:22.8px;line-height:32px;letter-spacing:-0.353px;left:1428.00px;color:#e0dfde;">Data</div><div class="a t " style="top:1166.00px;font-size:22.8px;line-height:32px;letter-spacing:0.626px;left:1560.00px;color:#f2f2f2;">&lt;&quot;pci1043,8723&quot;, &quot;pci8086,a2f0&quot;, &quot;pciclass,0403</div><div class="a t " style="top:1194.00px;font-size:22.8px;line-height:32px;letter-spacing:-0.022px;left:1560.00px;color:#f2f2f2;">00&quot;, &quot;CAVS&quot;, &quot;HDEF&quot;&gt;</div><div class="a " style="left:1075px;top:1228px;width:1011px;height:30px;background:#31302e;"></div><div class="a t " style="top:1228.00px;font-size:22.8px;line-height:32px;letter-spacing:0.508px;left:1113.50px;color:#e0dfde;">layout-id</div><div class="a t " style="top:1228.00px;font-size:22.8px;line-height:32px;letter-spacing:-0.353px;left:1428.00px;color:#e0dfde;">Data</div><div class="a t m" style="top:1227.00px;font-size:23.5px;line-height:33px;left:1560.00px;color:#ffffff;white-space:pre;letter-spacing:-0.857px;">&lt;07 00 00 00&gt;</div><div class="a " style="left:1075px;top:1258px;width:1011px;height:32px;background:#262524;"></div><svg class="a" style="left:1092px;top:1264px" width="15" height="19" viewBox="0 0 15 19"><path d="M0 0.2V18.2L15 9.2Z" fill="#a6a5a3"/></svg><div class="a t " style="top:1258.00px;font-size:22.8px;line-height:32px;letter-spacing:0.095px;left:1113.50px;color:#e0dfde;">IOServiceDEXTEntitlements</div><div class="a t " style="top:1258.00px;font-size:22.8px;line-height:32px;letter-spacing:-0.045px;left:1428.00px;color:#e0dfde;">Array</div><div class="a t " style="top:1258.00px;font-size:22.8px;line-height:32px;letter-spacing:-0.503px;left:1560.00px;color:#9c9b99;">1 value</div><div class="a " style="left:1075px;top:1290px;width:1011px;height:30px;background:#31302e;"></div><div class="a t " style="top:1290.00px;font-size:22.8px;line-height:32px;letter-spacing:-0.129px;left:1113.50px;color:#e0dfde;">AFGLowPowerState</div><div class="a t " style="top:1290.00px;font-size:22.8px;line-height:32px;letter-spacing:-0.353px;left:1428.00px;color:#e0dfde;">Data</div><div class="a t m" style="top:1289.00px;font-size:23.5px;line-height:33px;left:1560.00px;color:#ffffff;white-space:pre;letter-spacing:-0.857px;">&lt;03 00 00 00&gt;</div><div class="a " style="left:1075px;top:1320px;width:1011px;height:32px;background:#262524;"></div><div class="a t " style="top:1320.00px;font-size:22.8px;line-height:32px;letter-spacing:0.634px;left:1113.50px;color:#e0dfde;">acpi-path</div><div class="a t " style="top:1320.00px;font-size:22.8px;line-height:32px;letter-spacing:0.198px;left:1428.00px;color:#e0dfde;">String</div><div class="a t " style="top:1320.00px;font-size:22.8px;line-height:32px;letter-spacing:-0.269px;left:1560.00px;color:#f2f2f2;">IOACPIPlane:/_SB/PC00@0/CAVS@1f0003</div><div class="a " style="left:1075px;top:1352px;width:1011px;height:32px;background:#31302e;"></div><div class="a t " style="top:1352.00px;font-size:22.8px;line-height:32px;letter-spacing:0.130px;left:1113.50px;color:#e0dfde;">model</div><div class="a t " style="top:1352.00px;font-size:22.8px;line-height:32px;letter-spacing:-0.353px;left:1428.00px;color:#e0dfde;">Data</div><div class="a t " style="top:1352.00px;font-size:22.8px;line-height:32px;letter-spacing:-0.001px;left:1560.00px;color:#f2f2f2;">&lt;&quot;Realtek ALC S1220A&quot;&gt;</div><div class="a " style="left:1075px;top:1384px;width:1011px;height:30px;background:#262524;"></div><div class="a t " style="top:1384.00px;font-size:22.8px;line-height:32px;letter-spacing:0.537px;left:1113.50px;color:#e0dfde;">subsystem-id</div><div class="a t " style="top:1384.00px;font-size:22.8px;line-height:32px;letter-spacing:-0.353px;left:1428.00px;color:#e0dfde;">Data</div><div class="a t m" style="top:1383.00px;font-size:23.5px;line-height:33px;left:1560.00px;color:#ffffff;white-space:pre;letter-spacing:-0.857px;">&lt;23 87 00 00&gt;</div><div class="a " style="left:1075px;top:1414px;width:1011px;height:30px;background:#31302e;"></div><div class="a t " style="top:1414.00px;font-size:22.8px;line-height:32px;letter-spacing:0.508px;left:1113.50px;color:#e0dfde;">revision-id</div><div class="a t " style="top:1414.00px;font-size:22.8px;line-height:32px;letter-spacing:-0.353px;left:1428.00px;color:#e0dfde;">Data</div><div class="a t m" style="top:1413.00px;font-size:23.5px;line-height:33px;left:1560.00px;color:#ffffff;white-space:pre;letter-spacing:-0.857px;">&lt;00 00 00 00&gt;</div><div class="a " style="left:1075px;top:1444px;width:1011px;height:32px;background:#262524;"></div><div class="a t " style="top:1444.00px;font-size:22.8px;line-height:32px;letter-spacing:0.462px;left:1113.50px;color:#e0dfde;">pcidebug</div><div class="a t " style="top:1444.00px;font-size:22.8px;line-height:32px;letter-spacing:0.198px;left:1428.00px;color:#e0dfde;">String</div><div class="a t " style="top:1444.00px;font-size:22.8px;line-height:32px;letter-spacing:-0.024px;left:1560.00px;color:#f2f2f2;">0:31:3</div><div class="a " style="left:1075px;top:1476px;width:1011px;height:32px;background:#31302e;"></div><div class="a t " style="top:1476.00px;font-size:22.8px;line-height:32px;letter-spacing:-0.398px;left:1113.50px;color:#e0dfde;">IOName</div><div class="a t " style="top:1476.00px;font-size:22.8px;line-height:32px;letter-spacing:0.198px;left:1428.00px;color:#e0dfde;">String</div><div class="a t " style="top:1476.00px;font-size:22.8px;line-height:32px;letter-spacing:0.785px;left:1560.00px;color:#f2f2f2;">pci8086,a2f0</div><div class="a " style="left:1075px;top:1508px;width:1011px;height:32px;background:#262524;"></div><svg class="a" style="left:1092px;top:1514px" width="15" height="19" viewBox="0 0 15 19"><path d="M0 0.2V18.2L15 9.2Z" fill="#a6a5a3"/></svg><div class="a t " style="top:1508.00px;font-size:22.8px;line-height:32px;letter-spacing:0.065px;left:1113.50px;color:#e0dfde;">IOReportLegend</div><div class="a t " style="top:1508.00px;font-size:22.8px;line-height:32px;letter-spacing:-0.045px;left:1428.00px;color:#e0dfde;">Array</div><div class="a t " style="top:1508.00px;font-size:22.8px;line-height:32px;letter-spacing:-0.503px;left:1560.00px;color:#9c9b99;">1 value</div><div class="a " style="left:1075px;top:1540px;width:1011px;height:134px;background:#31302e;"></div><div class="a t " style="top:1540.00px;font-size:22.8px;line-height:32px;letter-spacing:-0.152px;left:1113.50px;color:#e0dfde;">reg</div><div class="a t " style="top:1540.00px;font-size:22.8px;line-height:32px;letter-spacing:-0.353px;left:1428.00px;color:#e0dfde;">Data</div><div class="a t m" style="top:1539.00px;font-size:23.5px;line-height:33px;left:1560.00px;color:#ffffff;white-space:pre;letter-spacing:-0.857px;">&lt;00 fb 00 00 00 00 00 00 00 00 00 00 00</div><div class="a t m" style="top:1565.00px;font-size:23.5px;line-height:33px;left:1560.00px;color:#ffffff;white-space:pre;letter-spacing:-0.857px;"> 00 00 00 00 00 00 00 10 fb 00 02 00 00</div><div class="a t m" style="top:1591.00px;font-size:23.5px;line-height:33px;left:1560.00px;color:#ffffff;white-space:pre;letter-spacing:-0.857px;"> 00 00 00 00 00 00 00 00 00 00 00 40 00</div><div class="a t m" style="top:1617.00px;font-size:23.5px;line-height:33px;left:1560.00px;color:#ffffff;white-space:pre;letter-spacing:-0.857px;"> 00 20 fb 00 02 00 00 00 00 00 00 00 00</div><div class="a t m" style="top:1643.00px;font-size:23.5px;line-height:33px;left:1560.00px;color:#ffffff;white-space:pre;letter-spacing:-0.857px;"> 00 00 00 00 00 00 01 00&gt;</div><div class="a " style="left:1075px;top:1674px;width:1011px;height:32px;background:#262524;"></div><div class="a " style="left:0px;top:1706px;width:2086px;height:2px;background:#595957;"></div><div class="a " style="left:0px;top:1708px;width:2086px;height:40px;background:#383735;"></div><div class="a t " style="top:1712.00px;font-size:22.8px;line-height:32px;letter-spacing:0.187px;left:22.50px;color:#e9e9e8;">Mykola&#8217;s Mac Pro (x86_64)</div><div class="a t " style="top:1712.00px;font-size:22.8px;line-height:32px;letter-spacing:0.520px;left:1808.25px;color:#e9e9e8;">2020-05-01 2:21:33 PM</div><div class="a " style="left:149px;top:809px;width:910px;height:230px;box-sizing:border-box;border:5px solid #fe0a13;"></div><div class="a " style="left:1068px;top:1072px;width:680px;height:38px;box-sizing:border-box;border:5px solid #fe0a13;"></div></div><div id="edge"></div>
</body></html>
